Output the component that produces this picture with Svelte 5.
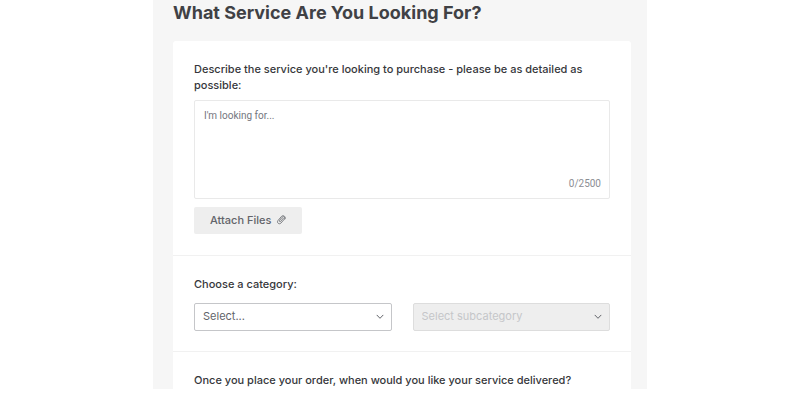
<script lang="ts">
	const maxLength = 2500;

	let description = $state('');
	let category = $state('');
	let subcategory = $state('');
	let fileInput: HTMLInputElement;

	const categories = ['Graphics & Design', 'Digital Marketing', 'Writing & Translation'];
</script>

{#snippet chevron()}
	<svg class="chevron" viewBox="0 0 8 6" aria-hidden="true">
		<path d="M1 1.2 4 4.3 7 1.2" />
	</svg>
{/snippet}

<main class="request">
	<h1>What Service Are You Looking For?</h1>

	<form class="card">
		<section class="details">
			<label class="question" for="description">
				Describe the service you're looking to purchase - please be as detailed as possible:
			</label>
			<div class="description">
				<textarea
					id="description"
					placeholder="I'm looking for..."
					maxlength={maxLength}
					bind:value={description}
				></textarea>
				<span class="counter">{description.length}/{maxLength}</span>
			</div>
			<input type="file" multiple hidden aria-label="Attach Files" bind:this={fileInput} />
			<button type="button" class="attach" onclick={() => fileInput.click()}>
				Attach Files
				<svg viewBox="0 0 10 10" aria-hidden="true">
					<path
						d="M7.3 3.3 4.6 6.4c-.7.8-1.8-.2-1.1-1L6.2 2.3c1.3-1.5 3.4.2 2.2 1.8L5 8C3.2 10 .3 7.6 2 5.5L5.4 1.5C7.3-.5 10.3 1.8 9 4"
					/>
				</svg>
			</button>
		</section>

		<section>
			<label class="question" for="category">Choose a category:</label>
			<div class="selects">
				<div class="select">
					<select id="category" bind:value={category}>
						<option value="">Select...</option>
						{#each categories as name}
							<option value={name}>{name}</option>
						{/each}
					</select>
					{@render chevron()}
				</div>
				<div class="select">
					<select aria-label="Subcategory" disabled={!category} bind:value={subcategory}>
						<option value="">Select subcategory</option>
					</select>
					{@render chevron()}
				</div>
			</div>
		</section>

		<section class="delivery">
			<h2 class="question">Once you place your order, when would you like your service delivered?</h2>
		</section>
	</form>
</main>

<style>
	:global(body) {
		background: #ffffff;
	}

	.request {
		box-sizing: border-box;
		max-width: 494px;
		margin: 0 auto;
		padding: 1px 16px 0 20px;
		background: #f6f6f6;
		color: #404145;
		font-family: Inter, "Liberation Sans", sans-serif;
		font-size: 11px;
		line-height: 16px;
	}

	h1 {
		margin: 0 0 16px;
		font-size: 18px;
		font-weight: 700;
		line-height: 24px;
	}

	.card {
		background: #ffffff;
		border-radius: 3px 3px 0 0;
	}

	section {
		padding: 20px 21px;
	}

	section + section {
		border-top: 1px solid #f1f1f1;
	}

	.details {
		padding-bottom: 21px;
	}

	.delivery {
		padding-bottom: 1px;
	}

	.question {
		display: block;
		margin: 0;
		color: #36373b;
		font-size: 11px;
		font-weight: 500;
	}

	.description {
		position: relative;
		margin: 7px 0 8px;
	}

	textarea {
		display: block;
		box-sizing: border-box;
		width: 100%;
		height: 99px;
		padding: 7px 9px;
		border: 1px solid #e9e9e9;
		border-radius: 2px;
		resize: none;
		color: #62646a;
		font-family: Roboto, sans-serif;
		font-size: 10px;
		line-height: 16px;
	}

	textarea::placeholder {
		color: #74767e;
		opacity: 1;
	}

	.counter {
		position: absolute;
		right: 9px;
		bottom: 7px;
		color: #8c8e94;
		font-family: Roboto, sans-serif;
		font-size: 10px;
	}

	.attach {
		display: flex;
		align-items: center;
		gap: 5px;
		height: 27px;
		padding: 0 16px 2px;
		border: 0;
		border-radius: 2px;
		background: #eeeeee;
		color: #62646a;
		font: inherit;
		font-weight: 500;
		cursor: pointer;
	}

	.attach svg {
		width: 10px;
		height: 10px;
	}

	.attach path,
	.chevron path {
		fill: none;
		stroke: #62646a;
		stroke-linecap: round;
		stroke-linejoin: round;
	}

	.attach path {
		stroke-width: 0.8;
	}

	.selects {
		display: grid;
		grid-template-columns: 1fr 1fr;
		gap: 21px;
		margin-top: 11px;
	}

	.select {
		position: relative;
	}

	select {
		display: block;
		box-sizing: border-box;
		width: 100%;
		height: 28px;
		padding: 0 24px 2px 8px;
		appearance: none;
		border: 1px solid #c5c6c9;
		border-radius: 2px;
		background: #ffffff;
		color: #62646a;
		font: inherit;
	}

	select:disabled {
		border-color: #dddddd;
		background: #eeeeee;
		color: #c5c6c9;
		opacity: 1;
	}

	.chevron {
		position: absolute;
		top: 11px;
		right: 8px;
		width: 8px;
		height: 6px;
		pointer-events: none;
	}
</style>
